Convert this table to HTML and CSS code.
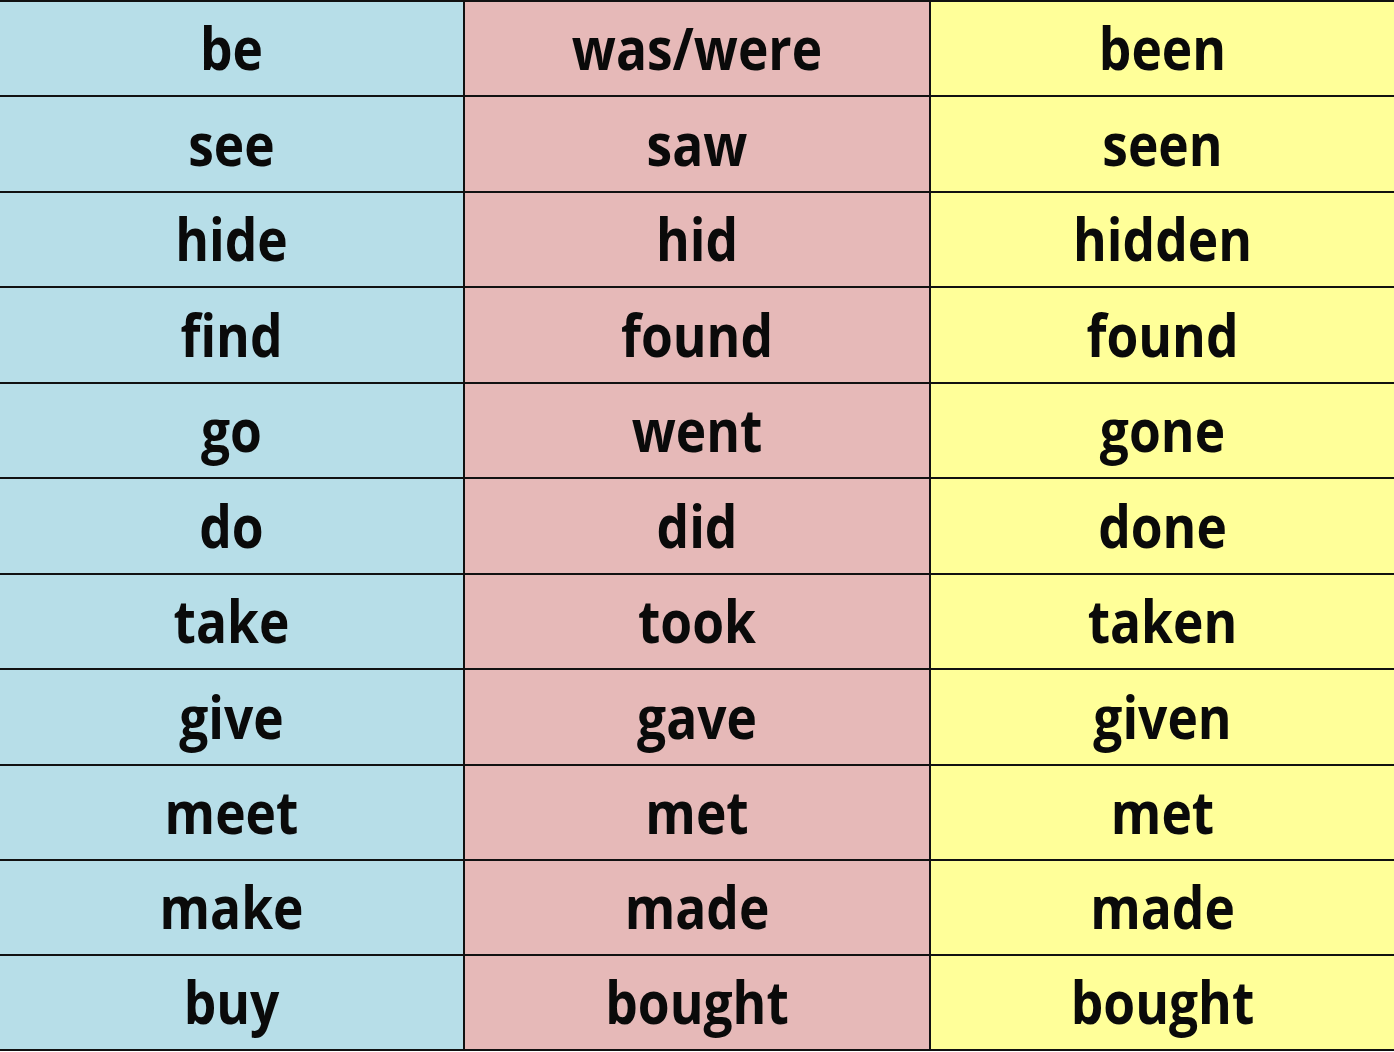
FILE: index.html
```html
<!DOCTYPE html>
<html lang="en">
<head>
<meta charset="utf-8">
<title>Irregular verbs</title>
<link rel="stylesheet" href="styles.css">
</head>
<body>
<div class="verbs">
  <div class="cell c1"><span>be</span></div><div class="cell c2"><span>was/were</span></div><div class="cell c3"><span>been</span></div>
  <div class="cell c1"><span>see</span></div><div class="cell c2"><span>saw</span></div><div class="cell c3"><span>seen</span></div>
  <div class="cell c1"><span>hide</span></div><div class="cell c2"><span>hid</span></div><div class="cell c3"><span>hidden</span></div>
  <div class="cell c1"><span>find</span></div><div class="cell c2"><span>found</span></div><div class="cell c3"><span>found</span></div>
  <div class="cell c1"><span>go</span></div><div class="cell c2"><span>went</span></div><div class="cell c3"><span>gone</span></div>
  <div class="cell c1"><span>do</span></div><div class="cell c2"><span>did</span></div><div class="cell c3"><span>done</span></div>
  <div class="cell c1"><span>take</span></div><div class="cell c2"><span>took</span></div><div class="cell c3"><span>taken</span></div>
  <div class="cell c1"><span>give</span></div><div class="cell c2"><span>gave</span></div><div class="cell c3"><span>given</span></div>
  <div class="cell c1"><span>meet</span></div><div class="cell c2"><span>met</span></div><div class="cell c3"><span>met</span></div>
  <div class="cell c1"><span>make</span></div><div class="cell c2"><span>made</span></div><div class="cell c3"><span>made</span></div>
  <div class="cell c1 last"><span>buy</span></div><div class="cell c2 last"><span>bought</span></div><div class="cell c3 last"><span>bought</span></div>
</div>
</body>
</html>
```

FILE: styles.css
```css
html, body {
  margin: 0;
  padding: 0;
  background: #ffffff;
}

.verbs {
  display: grid;
  grid-template-columns: 463px 466px 465px;
  grid-template-rows: repeat(10, 95.45px) 96.5px;
  width: 1394px;
  font-family: "Open Sans", "Liberation Sans", sans-serif;
  font-weight: 700;
  font-size: 51.5px;
  color: #0a0a0a;
}

.cell {
  box-sizing: border-box;
  border-top: 2px solid #111111;
  display: flex;
  align-items: center;
  justify-content: center;
  line-height: 1;
}

.cell span {
  display: block;
  transform: scaleY(1.15);
  padding-bottom: 1px;
}

.c1 { background: #b7dee8; }
.c2 { background: #e6b9b8; border-left: 2px solid #111111; }
.c3 { background: #ffff99; border-left: 2px solid #111111; }

.last { border-bottom: 2px solid #111111; }
```
